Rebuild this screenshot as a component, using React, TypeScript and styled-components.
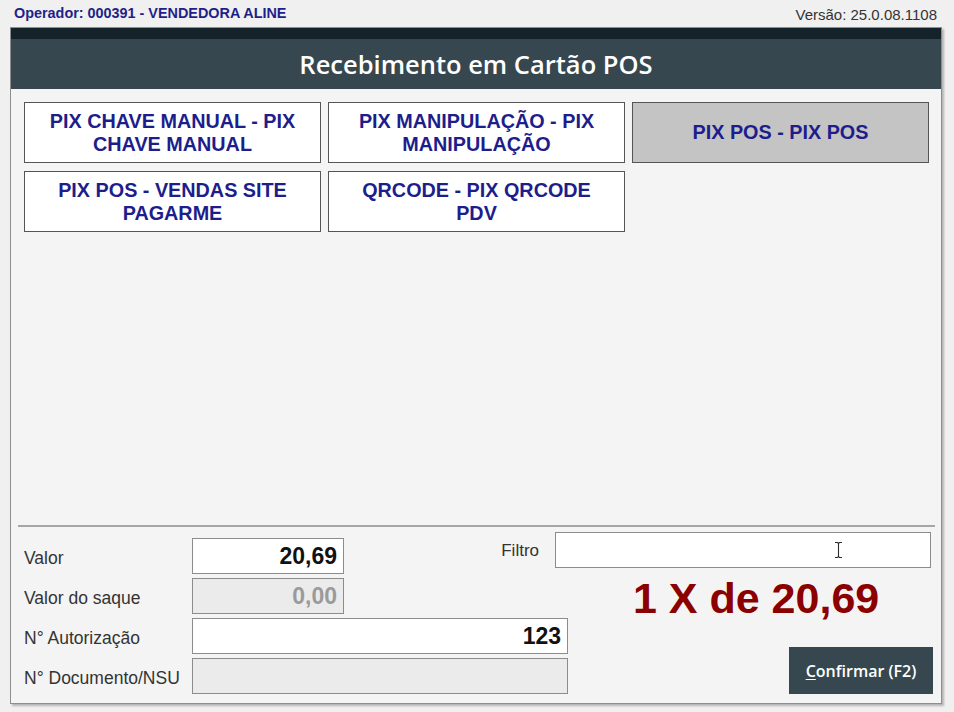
import React from "react"
import styled, { createGlobalStyle } from "styled-components"

/////////////////////////////////////////////////////////////////////////////

const OPTIONS = [
  { id: "chave", label: "PIX CHAVE MANUAL - PIX CHAVE MANUAL" },
  { id: "manip", label: "PIX MANIPULAÇÃO - PIX MANIPULAÇÃO" },
  { id: "pos", label: "PIX POS - PIX POS" },
  { id: "site", label: "PIX POS - VENDAS SITE PAGARME" },
  { id: "qr", label: "QRCODE - PIX QRCODE PDV" },
]

const SELECTED = "pos"

const App: React.FC = () => {
  return (
    <>
      <GlobalStyle />
      <Page>
        <TopBar>
          <Operator>Operador: 000391 - VENDEDORA ALINE</Operator>
          <Version>Versão: 25.0.08.1108</Version>
        </TopBar>
        <Window>
          <Strip />
          <Header>Recebimento em Cartão POS</Header>
          <Body>
            <OptionGrid>
              {OPTIONS.map((o) => (
                <OptionButton key={o.id} $selected={o.id === SELECTED}>
                  {o.label}
                </OptionButton>
              ))}
            </OptionGrid>
            <Separator />
            <Form>
              <Label $row={1}>Valor</Label>
              <Field $row={1} $col="2 / 3">20,69</Field>
              <FilterLabel>Filtro</FilterLabel>
              <FilterField>
                <CaretIcon width="9" height="18" viewBox="0 0 9 18">
                  <path
                    d="M1 1.5h2.5l1 1 1-1H8M4.5 2.5v13M1 16.5h2.5l1-1 1 1H8"
                    fill="none"
                    stroke="#2b2b2b"
                    strokeWidth="1.1"
                  />
                </CaretIcon>
              </FilterField>

              <Label $row={2}>Valor do saque</Label>
              <Field $row={2} $col="2 / 3" $disabled>
                0,00
              </Field>
              <Total>1 X de 20,69</Total>

              <Label $row={3}>N° Autorização</Label>
              <Field $row={3} $col="2 / 5">123</Field>

              <Label $row={4}>N° Documento/NSU</Label>
              <Field $row={4} $col="2 / 5" $disabled />

              <ConfirmButton>
                <u>C</u>onfirmar (F2)
              </ConfirmButton>
            </Form>
          </Body>
        </Window>
      </Page>
    </>
  )
}

/////////////////////////////////////////////////////////////////////////////

const GlobalStyle = createGlobalStyle`
  html, body {
    margin: 0;
    padding: 0;
    background: #f0f0f0;
  }
  body {
    font-family: "Liberation Sans", Arial, sans-serif;
  }
`

const Page = styled.div`
  width: 954px;
  height: 712px;
  box-sizing: border-box;
  padding: 0 12px 0 10px;
  display: flex;
  flex-direction: column;
`

const TopBar = styled.div`
  height: 27px;
  display: flex;
  justify-content: space-between;
  align-items: center;
  padding: 0 5px 0 4px;
`

const Operator = styled.span`
  font-size: 14.4px;
  font-weight: bold;
  color: #1f1f8a;
  margin-top: -1px;
`

const Version = styled.span`
  font-size: 15px;
  color: #333;
  margin-top: 2px;
`

const Window = styled.div`
  height: 677px;
  box-sizing: border-box;
  border: 1px solid #8e8e8e;
  box-shadow: 2px 2px 2px rgba(0, 0, 0, 0.25);
  display: flex;
  flex-direction: column;
  background: #f4f4f4;
`

const Strip = styled.div`
  height: 11px;
  background: #14232a;
`

const Header = styled.div`
  height: 50px;
  background: #37474f;
  color: #fff;
  font-family: "Open Sans", sans-serif;
  font-weight: 600;
  font-size: 25.5px;
  display: flex;
  align-items: center;
  justify-content: center;
`

const Body = styled.div`
  flex: 1;
  display: flex;
  flex-direction: column;
`

const OptionGrid = styled.div`
  flex: 1;
  display: grid;
  grid-template-columns: repeat(3, 297px);
  grid-auto-rows: 61px;
  gap: 8px 7px;
  align-content: start;
  padding: 13px 0 0 13px;
`

const OptionButton = styled.div<{ $selected?: boolean }>`
  box-sizing: border-box;
  border: 1.5px solid #555;
  background: ${(p) => (p.$selected ? "#c4c4c4" : "#fff")};
  color: #1d1d8c;
  font-weight: bold;
  font-size: 19.8px;
  line-height: 23px;
  text-align: center;
  display: flex;
  align-items: center;
  justify-content: center;
  padding: 0 12px;
`

const Separator = styled.div`
  height: 0;
  border-top: 2px solid #a6a6a6;
  margin: 0 6px 0 7px;
`

const Form = styled.div`
  position: relative;
  display: grid;
  grid-template-columns: 168px 152px 211px 13px 1fr;
  grid-template-rows: 42px 36px 36px 36px;
  row-gap: 4px;
  padding: 5px 10px 9px 13px;
`

const Label = styled.div<{ $row: number }>`
  grid-row: ${(p) => p.$row};
  grid-column: 1;
  align-self: end;
  height: 36px;
  line-height: 40px;
  font-size: 17.5px;
  color: #333;
  white-space: nowrap;
`

const Field = styled.div<{ $row: number; $col: string; $disabled?: boolean }>`
  grid-row: ${(p) => p.$row};
  grid-column: ${(p) => p.$col};
  align-self: end;
  box-sizing: border-box;
  height: 36px;
  border: 1px solid #8c8c8c;
  background: ${(p) => (p.$disabled ? "#ebebeb" : "#fff")};
  color: ${(p) => (p.$disabled ? "#9a9a9a" : "#111")};
  font-weight: bold;
  font-size: 23px;
  line-height: 34px;
  text-align: right;
  padding: 0 6px 0 6px;
`

const FilterLabel = styled.div`
  grid-row: 1;
  grid-column: 3;
  justify-self: end;
  align-self: start;
  padding-right: 16px;
  height: 35px;
  line-height: 38px;
  font-size: 17px;
  color: #333;
`

const FilterField = styled.div`
  grid-row: 1;
  grid-column: 4 / 6;
  align-self: start;
  position: relative;
  box-sizing: border-box;
  height: 36px;
  border: 1px solid #8c8c8c;
  background: #fff;
`

const CaretIcon = styled.svg`
  position: absolute;
  left: 278px;
  top: 8px;
`

const Total = styled.div`
  grid-row: 2;
  grid-column: 4 / 6;
  align-self: center;
  padding-left: 78px;
  margin-top: 5px;
  font-size: 43px;
  font-weight: bold;
  color: #8b0000;
  white-space: nowrap;
`

const ConfirmButton = styled.div`
  grid-row: 3 / 5;
  grid-column: 5;
  justify-self: end;
  align-self: end;
  margin-right: -2px;
  width: 144px;
  height: 47px;
  background: #37474f;
  color: #fff;
  font-family: "Open Sans", sans-serif;
  font-weight: 600;
  font-size: 16px;
  display: flex;
  align-items: center;
  justify-content: center;

  u {
    text-underline-offset: 2px;
  }
`

export default App
